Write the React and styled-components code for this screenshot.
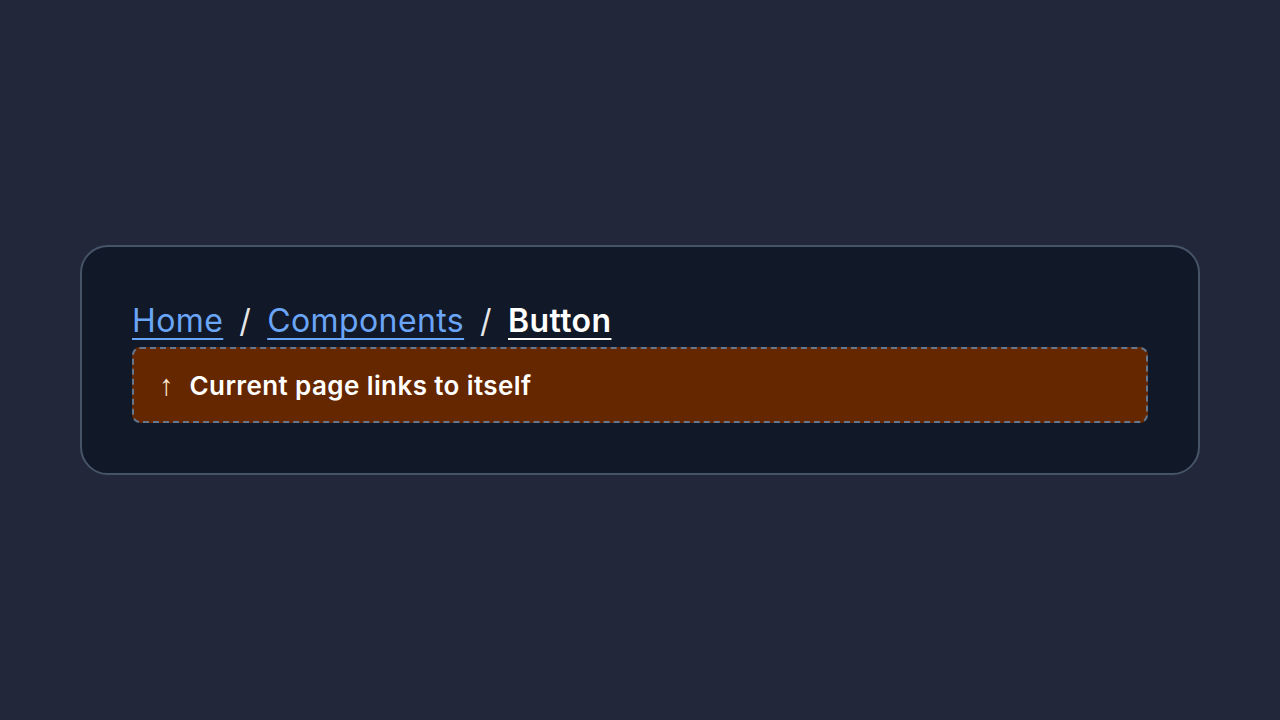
import React from 'react';
import styled, { createGlobalStyle } from 'styled-components';

const GlobalStyle = createGlobalStyle`
  html, body {
    margin: 0;
    padding: 0;
    background: #222839;
  }
  body {
    font-family: Inter, "Noto Sans", "Liberation Sans", sans-serif;
  }
`;

const Page = styled.div`
  width: 1280px;
  height: 720px;
  display: flex;
  align-items: center;
  justify-content: center;
  box-sizing: border-box;
`;

const Card = styled.div`
  width: 1120px;
  box-sizing: border-box;
  background: #111827;
  border: 2px solid #465467;
  border-radius: 28px;
  padding: 50px;
  display: flex;
  flex-direction: column;
  gap: 2px;
`;

const Trail = styled.nav`
  display: flex;
  align-items: center;
  gap: 16px;
  font-size: 32px;
  line-height: 48px;
  letter-spacing: 0.4px;
  color: #e5e7eb;
`;

const Crumb = styled.a`
  color: ${(p) => (p.$current ? '#ffffff' : '#6aa5f8')};
  font-weight: ${(p) => (p.$current ? 600 : 400)};
  text-decoration: underline;
  text-decoration-thickness: 2px;
  text-decoration-skip-ink: none;
  text-underline-offset: 6px;
  cursor: pointer;
`;

const Sep = styled.span`
  color: #e5e7eb;
`;

const Note = styled.div`
  height: 76px;
  box-sizing: border-box;
  background: #652700;
  border: 2px dashed #66768c;
  border-radius: 8px;
  display: flex;
  align-items: baseline;
  gap: 16px;
  padding: 20px 25px 0;
  color: #ffffff;
  font-size: 26px;
  line-height: 32px;
  font-weight: 600;
  letter-spacing: 0.4px;
`;

const Arrow = styled.span`
  font-family: "Liberation Sans", sans-serif;
  font-weight: 400;
  font-size: 29px;
  color: #fbead2;
  letter-spacing: 0;
`;

const App = () => (
  <Page>
    <GlobalStyle />
    <Card>
      <Trail>
        <Crumb href="#">Home</Crumb>
        <Sep>/</Sep>
        <Crumb href="#">Components</Crumb>
        <Sep>/</Sep>
        <Crumb href="#" $current aria-current="page">Button</Crumb>
      </Trail>
      <Note>
        <Arrow>↑</Arrow>
        Current page links to itself
      </Note>
    </Card>
  </Page>
);

export default App;
